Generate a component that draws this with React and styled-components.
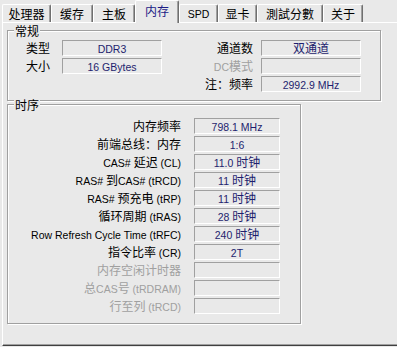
import React from 'react'
import styled, { createGlobalStyle } from 'styled-components'

const BG = '#e9e9e9'

const GlobalStyle = createGlobalStyle`
  html, body {
    margin: 0;
    padding: 0;
    background: ${BG};
  }
  body {
    font-family: "Liberation Sans", "Noto Sans CJK SC", sans-serif;
  }
`

const tabs = [
  { label: '处理器', w: 49 },
  { label: '缓存', w: 42 },
  { label: '主板', w: 42 },
  { label: '内存', w: 44, active: true },
  { label: 'SPD', w: 39 },
  { label: '显卡', w: 39 },
  { label: '測試分數', w: 66 },
  { label: '关于', w: 40 },
]

const generalLeft = [
  { label: '类型', value: 'DDR3' },
  { label: '大小', value: '16 GBytes' },
]

const generalRight = [
  { label: '通道数', value: '双通道' },
  { label: 'DC模式', value: '', disabled: true },
  { label: '注：频率', value: '2992.9 MHz' },
]

const timings = [
  { label: '内存频率', value: '798.1 MHz' },
  { label: '前端总线：内存', value: '1:6' },
  { label: 'CAS# 延迟 (CL)', value: '11.0 时钟' },
  { label: 'RAS# 到CAS# (tRCD)', value: '11 时钟' },
  { label: 'RAS# 预充电 (tRP)', value: '11 时钟' },
  { label: '循环周期 (tRAS)', value: '28 时钟' },
  { label: 'Row Refresh Cycle Time (tRFC)', value: '240 时钟' },
  { label: '指令比率 (CR)', value: '2T' },
  { label: '内存空闲计时器', value: '', disabled: true },
  { label: '总CAS号 (tRDRAM)', value: '', disabled: true },
  { label: '行至列 (tRCD)', value: '', disabled: true },
]

// CJK glyphs are drawn bigger than the latin ones, as in the original dialog
const CJK = /([\u3000-\u303f\u4e00-\u9fff\uff00-\uffef]+)/

const Text = ({ children }) =>
  String(children)
    .split(CJK)
    .filter(Boolean)
    .map((part, i) =>
      CJK.test(part) ? <Han key={i}>{part}</Han> : <Latin key={i}>{part}</Latin>
    )

const FieldBlock = ({ rows, label, field, gap }) => (
  <FieldGrid $label={label} $field={field}>
    {rows.map(r => (
      <React.Fragment key={r.label}>
        <Label $gap={gap} $disabled={r.disabled}>
          <Text>{r.label}</Text>
        </Label>
        <Value>{r.value && <Text>{r.value}</Text>}</Value>
      </React.Fragment>
    ))}
  </FieldGrid>
)

export default function App() {
  return (
    <>
      <GlobalStyle />
      <Window>
        <TabBar>
          {tabs.map(t => (
            <Tab key={t.label} $w={t.w} $active={t.active}>
              <Text>{t.label}</Text>
            </Tab>
          ))}
        </TabBar>
        <Panel>
          <Group $w={374} $pad="9px 0 8px 0">
            <Legend><Text>常规</Text></Legend>
            <Columns>
              <FieldBlock rows={generalLeft} label={54} field={100} gap={12} />
              <FieldBlock rows={generalRight} label={99} field={100} gap={8} />
            </Columns>
          </Group>
          <Group $w={294} $pad="13px 0 9px 0">
            <Legend><Text>时序</Text></Legend>
            <FieldBlock rows={timings} label={186} field={86} gap={13} />
          </Group>
        </Panel>
      </Window>
    </>
  )
}

const Han = styled.span`
  font-family: "Noto Sans CJK SC", sans-serif;
  font-size: 12px;
`

const Latin = styled.span`
  font-family: "Liberation Sans", Arial, sans-serif;
  font-size: 10.5px;
  white-space: pre;
`

const Window = styled.div`
  width: 397px;
  height: 347px;
  overflow: hidden;
  background: ${BG};
  color: #000;
  line-height: 16px;
`

const TabBar = styled.div`
  display: flex;
  align-items: flex-end;
  height: 22px;
  padding-left: 2px;
  position: relative;
  z-index: 1;
`

const Tab = styled.div`
  box-sizing: border-box;
  flex: none;
  width: ${p => p.$w}px;
  height: ${p => (p.$active ? 23 : 18)}px;
  margin-bottom: ${p => (p.$active ? -1 : 0)}px;
  display: flex;
  align-items: center;
  justify-content: center;
  padding-bottom: ${p => (p.$active ? 2 : 0)}px;
  border-top: 1px solid #fff;
  border-left: 1px solid #fff;
  border-right: 1px solid #6f6f6f;
  border-radius: 2px 2px 0 0;
  box-shadow: inset -1px 0 0 #a0a0a0;
  background: ${BG};
  color: ${p => (p.$active ? '#1b1b86' : '#000')};
`

const Panel = styled.div`
  box-sizing: border-box;
  height: 324px;
  margin-left: 2px;
  padding: 7px 0 0 4px;
  border-top: 1px solid #fff;
  border-left: 1px solid #fff;
  border-bottom: 1px solid #404040;
  box-shadow: inset 0 -1px 0 #a0a0a0;
`

const Group = styled.div`
  position: relative;
  box-sizing: border-box;
  width: ${p => p.$w}px;
  padding: ${p => p.$pad};
  border: 1px solid #a0a0a0;
  box-shadow: inset 1px 1px 0 #fff, 1px 1px 0 #fff;

  & + & {
    margin-top: 3px;
  }
`

const Legend = styled.div`
  position: absolute;
  top: -8px;
  left: 6px;
  padding: 0 1px;
  background: ${BG};
`

const Columns = styled.div`
  display: flex;
`

const FieldGrid = styled.div`
  display: grid;
  grid-template-columns: ${p => p.$label}px ${p => p.$field}px;
  grid-auto-rows: 16px;
  row-gap: 2px;
  align-content: start;
`

const Label = styled.div`
  padding-right: ${p => p.$gap}px;
  text-align: right;
  white-space: nowrap;
  color: ${p => (p.$disabled ? '#a0a0a0' : '#000')};
`

const Value = styled.div`
  box-sizing: border-box;
  border: 1px solid;
  border-color: #a0a0a0 #fff #fff #a0a0a0;
  line-height: 14px;
  text-align: center;
  white-space: nowrap;
  color: #1e1e6e;
`
